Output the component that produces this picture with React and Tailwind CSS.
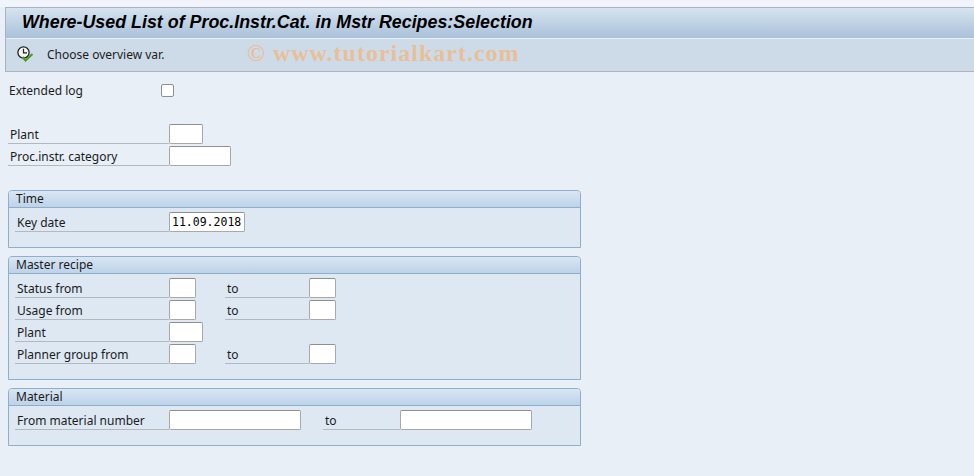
const font = "font-['Noto_Sans','Open_Sans',sans-serif]";

function Field({ width, children }) {
  return (
    <div
      className={`h-[20px] shrink-0 rounded-[2px] border border-[#a8a8a8] border-t-[#8f8f8f] bg-white pl-[2px] font-['DejaVu_Sans_Mono',monospace] text-[11.5px] leading-[19px] text-black ${width}`}
    >
      {children}
    </div>
  );
}

function Label({ width, children }) {
  return (
    <div
      className={`h-[20px] shrink-0 border-b border-[#b4b9bd] pl-[2px] text-[12px] leading-[22px] text-[#1b1b1b] ${width}`}
    >
      {children}
    </div>
  );
}

function Group({ title, height, children }) {
  return (
    <section
      className={`w-[573px] rounded-t-[4px] border border-[#8eaecb] bg-[#dde8f3] ${height}`}
    >
      <div className="h-[17px] rounded-t-[3px] border-b border-[#8eaecb] bg-gradient-to-b from-[#d9e6f3] to-[#bdd3e9] pl-[7px] text-[12px] leading-[16px] text-[#1b1b1b]">
        {title}
      </div>
      <div className="flex flex-col gap-[2px] pl-[6px] pt-[4px]">{children}</div>
    </section>
  );
}

function ClockIcon() {
  return (
    <svg width="18" height="18" viewBox="0 0 18 18" fill="none">
      <circle cx="6.5" cy="6.5" r="5.6" fill="#f4f4f0" stroke="#222" strokeWidth="1.3" />
      <path d="M6.5 2.8V6.8H10" stroke="#222" strokeWidth="1.2" />
      <path d="M5.5 11L8.5 14.5L15.5 8" stroke="#4d9a2c" strokeWidth="2.2" />
    </svg>
  );
}

export default function App() {
  return (
    <div className={`relative h-[476px] w-[974px] overflow-hidden bg-[#e8eff7] ${font}`}>
      <div className="h-[7px] bg-[#f1f5fb]" />
      <header className="ml-[5px] border-l border-t border-[#a9b3c1]">
        <div className="h-[30px] bg-gradient-to-b from-[#d6e3f0] to-[#a9c1d9] pl-[16px] font-['Liberation_Sans',sans-serif] text-[17.85px] font-bold italic leading-[28px] text-black">
          Where-Used List of Proc.Instr.Cat. in Mstr Recipes:Selection
        </div>
        <div className="flex h-[34px] items-center gap-[12px] border-b border-t border-b-[#a9b3c1] border-t-[#e6eef6] bg-[#cddbe8] pl-[11px] text-[12px] text-[#1b1b1b]">
          <ClockIcon />
          <span>Choose overview var.</span>
        </div>
      </header>

      <div className="absolute left-[247px] top-[38px] font-['Liberation_Serif',serif] text-[24px] font-bold leading-[30px] tracking-[1px] text-[#e9bf97]">
        © www.tutorialkart.com
      </div>

      <main className="ml-[8px]">
        <div className="box-content flex h-[20px] items-center pt-[8px]">
          <div className="w-[153px] pl-[1px] pt-[1px] text-[12px] text-[#1b1b1b]">Extended log</div>
          <div className="h-[13px] w-[13px] rounded-[2px] border border-[#8f8f8f] bg-white" />
        </div>

        <div className="mt-[24px] flex flex-col gap-[2px]">
          <div className="flex">
            <Label width="w-[161px]">Plant</Label>
            <Field width="w-[34px]" />
          </div>
          <div className="flex">
            <Label width="w-[161px]">Proc.instr. category</Label>
            <Field width="w-[62px]" />
          </div>
        </div>

        <div className="mt-[24px] flex flex-col gap-[8px]">
          <Group title="Time" height="h-[58px]">
            <div className="flex">
              <Label width="w-[154px]">Key date</Label>
              <Field width="w-[76px]">11.09.2018</Field>
            </div>
          </Group>

          <Group title="Master recipe" height="h-[124px]">
            <div className="flex">
              <Label width="w-[154px]">Status from</Label>
              <Field width="w-[27px]" />
              <div className="w-[29px]" />
              <Label width="w-[84px]">to</Label>
              <Field width="w-[27px]" />
            </div>
            <div className="flex">
              <Label width="w-[154px]">Usage from</Label>
              <Field width="w-[27px]" />
              <div className="w-[29px]" />
              <Label width="w-[84px]">to</Label>
              <Field width="w-[27px]" />
            </div>
            <div className="flex">
              <Label width="w-[154px]">Plant</Label>
              <Field width="w-[34px]" />
            </div>
            <div className="flex">
              <Label width="w-[154px]">Planner group from</Label>
              <Field width="w-[27px]" />
              <div className="w-[29px]" />
              <Label width="w-[84px]">to</Label>
              <Field width="w-[27px]" />
            </div>
          </Group>

          <Group title="Material" height="h-[58px]">
            <div className="flex">
              <Label width="w-[154px]">From material number</Label>
              <Field width="w-[132px]" />
              <div className="w-[22px]" />
              <Label width="w-[77px]">to</Label>
              <Field width="w-[132px]" />
            </div>
          </Group>
        </div>
      </main>
    </div>
  );
}
